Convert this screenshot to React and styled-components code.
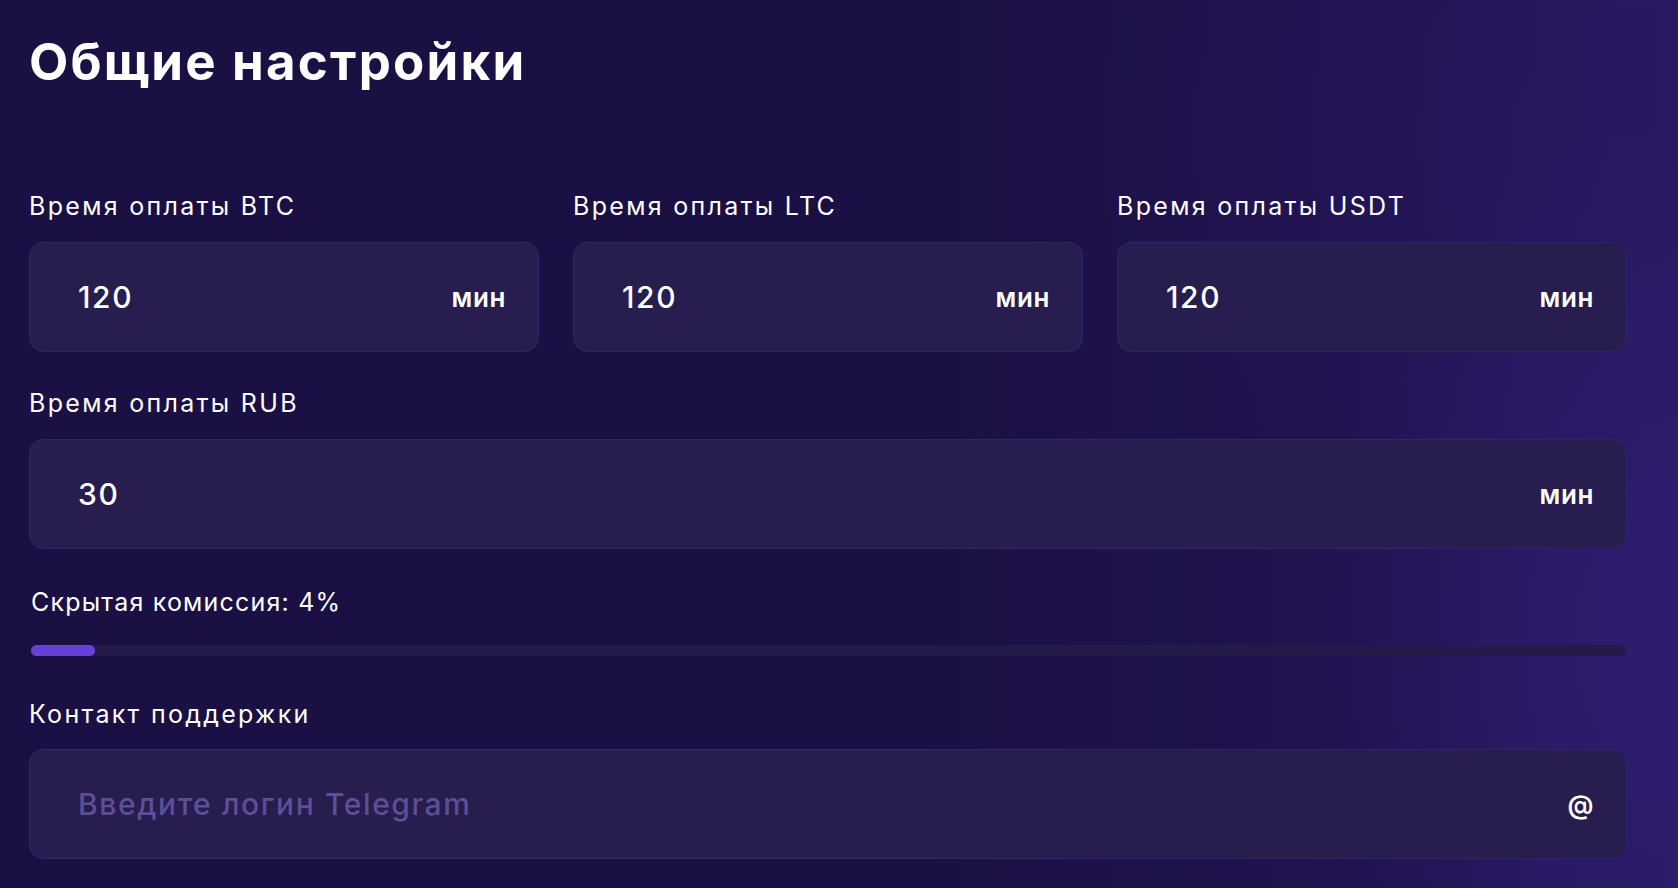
import React from 'react';
import styled, { createGlobalStyle } from 'styled-components';

const GlobalStyle = createGlobalStyle`
html, body, #root {
    margin: 0;
    padding: 0;
    min-height: 100%;
}
body {
    background: #1b1043;
    font-family: Inter, "Noto Sans", sans-serif;
    color: #fff;
}
* {
    box-sizing: border-box;
}
`;

const Page = styled.div`
min-height: 100vh;
padding: 32px 51px 30px 29px;
background:
    radial-gradient(ellipse 22% 60% at 100% 72%, rgba(48, 29, 116, 0.85) 0%, rgba(48, 29, 116, 0) 100%),
    radial-gradient(ellipse 35% 50% at 100% 15%, rgba(40, 24, 95, 0.7) 0%, rgba(40, 24, 95, 0) 100%),
    linear-gradient(90deg, #1b1043 0%, #1b1043 55%, #221452 85%, #2a1a64 100%);
`;

const Title = styled.h1`
margin: 0 0 99px;
font-family: Inter, "Open Sans", sans-serif;
font-size: 51px;
line-height: 60px;
font-weight: 700;
letter-spacing: 2.2px;
color: #fff;
`;

const Row = styled.div`
display: grid;
grid-template-columns: repeat(${p => p.cols || 1}, minmax(0, 1fr));
gap: 34px;
margin-bottom: ${p => p.mb || 36}px;
`;

const Field = styled.label`
display: flex;
flex-direction: column;
gap: ${p => p.gap || 21}px;
`;

const Label = styled.span`
font-size: 25px;
line-height: 30px;
font-weight: 400;
letter-spacing: ${p => p.spacing || 1.8}px;
color: #fff;
`;

const Box = styled.div`
display: flex;
align-items: center;
height: 110px;
padding: 0 32px 0 48px;
background: #271d4f;
border: 1.5px solid #30256a;
border-radius: 14px;
`;

const Input = styled.input`
flex: 1;
min-width: 0;
width: 100%;
background: transparent;
border: none;
outline: none;
padding: 0;
font-family: Inter, "Noto Sans", sans-serif;
font-size: 30px;
font-weight: 500;
letter-spacing: 1.6px;
color: #fff;
&::placeholder {
    color: #5d4e95;
    opacity: 1;
    font-weight: 500;
}
`;

const Suffix = styled.span`
flex: none;
font-size: 26px;
font-weight: 600;
letter-spacing: 0.6px;
color: #fff;
`;

const SliderBlock = styled.div`
display: flex;
flex-direction: column;
gap: 28px;
padding-left: 2px;
margin-bottom: 43px;
`;

const Track = styled.div`
position: relative;
height: 11px;
border-radius: 6px;
background: #251b4b;
`;

const Fill = styled.div`
height: 100%;
border-radius: 6px;
background: #6541d6;
`;

function TimeField({ label, value }) {
    return (
        <Field>
            <Label spacing={2.3}>{label}</Label>
            <Box>
                <Input defaultValue={value} />
                <Suffix>мин</Suffix>
            </Box>
        </Field>
    );
}

export default function App() {
    const fee = 4;
    return (
        <>
            <GlobalStyle />
            <Page>
                <Title>Общие настройки</Title>
                <Row cols={3}>
                    <TimeField label="Время оплаты BTC" value="120" />
                    <TimeField label="Время оплаты LTC" value="120" />
                    <TimeField label="Время оплаты USDT" value="120" />
                </Row>
                <Row mb={38}>
                    <TimeField label="Время оплаты RUB" value="30" />
                </Row>
                <SliderBlock>
                    <Label spacing={1.2}>Скрытая комиссия: {fee}%</Label>
                    <Track>
                        <Fill style={{ width: `${fee}%` }} />
                    </Track>
                </SliderBlock>
                <Field gap={20}>
                    <Label spacing={2.3}>Контакт поддержки</Label>
                    <Box>
                        <Input placeholder="Введите логин Telegram" />
                        <Suffix>@</Suffix>
                    </Box>
                </Field>
            </Page>
        </>
    );
}
